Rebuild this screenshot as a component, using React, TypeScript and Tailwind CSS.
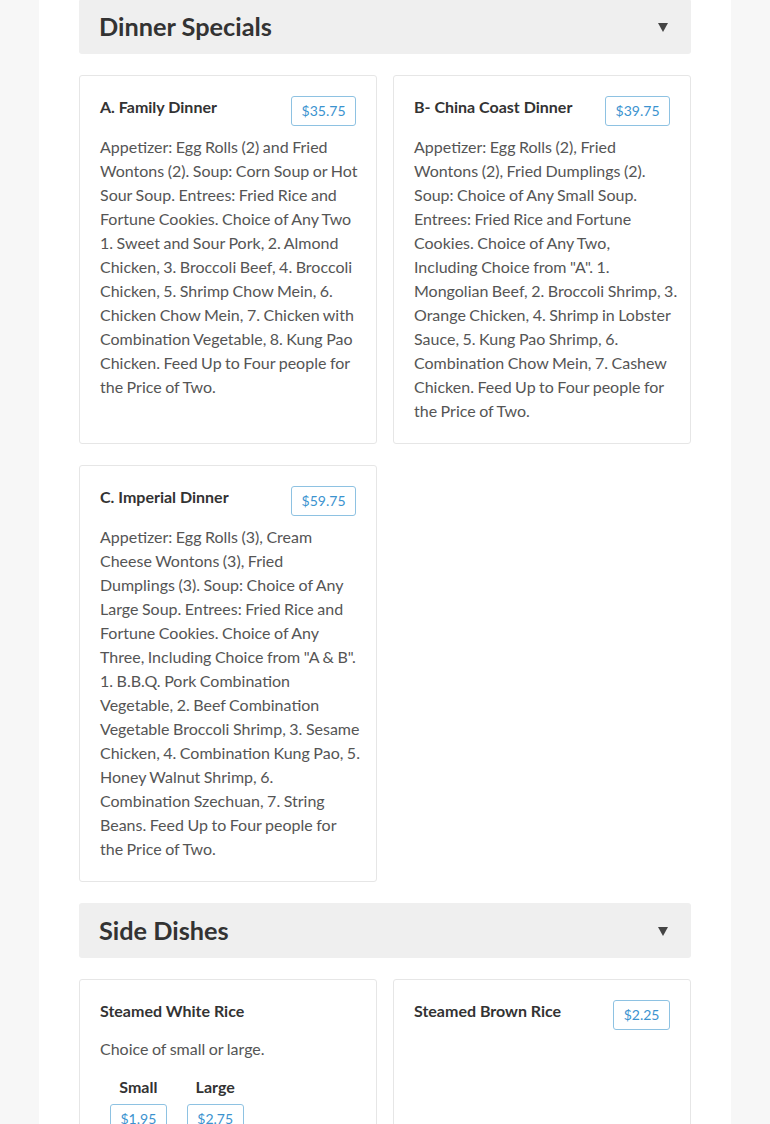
import React from "react";

type Item = {
  title: string;
  price?: string;
  desc?: string;
  lines?: string[];
  sizes?: { label: string; price: string }[];
};

const dinner: Item[] = [
  {
    title: "A. Family Dinner",
    price: "$35.75",
    desc:
      "Appetizer: Egg Rolls (2) and Fried Wontons (2). Soup: Corn Soup or Hot Sour Soup. Entrees: Fried Rice and Fortune Cookies. Choice of Any Two 1. Sweet and Sour Pork, 2. Almond Chicken, 3. Broccoli Beef, 4. Broccoli Chicken, 5. Shrimp Chow Mein, 6. Chicken Chow Mein, 7. Chicken with Combination Vegetable, 8. Kung Pao Chicken. Feed Up to Four people for the Price of Two.",
  },
  {
    title: "B- China Coast Dinner",
    price: "$39.75",
    lines: [
      "Appetizer: Egg Rolls (2), Fried",
      "Wontons (2), Fried Dumplings (2).",
      "Soup: Choice of Any Small Soup.",
      "Entrees: Fried Rice and Fortune",
      "Cookies. Choice of Any Two,",
      'Including Choice from "A". 1.',
      "Mongolian Beef, 2. Broccoli Shrimp, 3.",
      "Orange Chicken, 4. Shrimp in Lobster",
      "Sauce, 5. Kung Pao Shrimp, 6.",
      "Combination Chow Mein, 7. Cashew",
      "Chicken. Feed Up to Four people for",
      "the Price of Two.",
    ],
  },
  {
    title: "C. Imperial Dinner",
    price: "$59.75",
    desc:
      'Appetizer: Egg Rolls (3), Cream Cheese Wontons (3), Fried Dumplings (3). Soup: Choice of Any Large Soup. Entrees: Fried Rice and Fortune Cookies. Choice of Any Three, Including Choice from "A & B". 1. B.B.Q. Pork Combination Vegetable, 2. Beef Combination Vegetable Broccoli Shrimp, 3. Sesame Chicken, 4. Combination Kung Pao, 5. Honey Walnut Shrimp, 6. Combination Szechuan, 7. String Beans. Feed Up to Four people for the Price of Two.',
  },
];

const sides: Item[] = [
  {
    title: "Steamed White Rice",
    desc: "Choice of small or large.",
    sizes: [
      { label: "Small", price: "$1.95" },
      { label: "Large", price: "$2.75" },
    ],
  },
  { title: "Steamed Brown Rice", price: "$2.25" },
];

function Badge({ children }: { children: React.ReactNode }) {
  return (
    <span className="inline-block rounded-[3px] border border-[#8ec2e2] px-[9.5px] text-[14px] leading-[28px] text-[#3b93cf] whitespace-nowrap">
      {children}
    </span>
  );
}

function Card({ item }: { item: Item }) {
  const hasText = item.desc || item.lines;
  return (
    <div className="rounded-[3px] border border-[#e6e6e6] bg-white px-5 pt-5 pb-5">
      <div className="flex items-start justify-between gap-3">
        <h3 className="-mt-px text-[16px] font-bold leading-[24px] text-[#333]">{item.title}</h3>
        {item.price && <Badge>{item.price}</Badge>}
      </div>
      {hasText && (
        <p
          className={`${item.price ? "mt-[9px]" : "mt-[14px]"} -mr-[4px] text-[16px] leading-[24px] text-[#555] [word-spacing:-0.6px]`}
        >
          {item.lines
            ? item.lines.map((l, i) => (
                <span key={i} className="block whitespace-nowrap">
                  {l}
                </span>
              ))
            : item.desc}
        </p>
      )}
      {item.sizes && (
        <div className="mt-[15px] flex gap-[20px] px-[10px]">
          {item.sizes.map((s) => (
            <div key={s.label} className="flex flex-col items-center">
              <span className="-mt-px text-[16px] font-bold leading-[24px] text-[#333]">{s.label}</span>
              <div className="mt-[5px]">
                <Badge>{s.price}</Badge>
              </div>
            </div>
          ))}
        </div>
      )}
    </div>
  );
}

function Header({ title }: { title: string }) {
  return (
    <div className="flex h-[55px] items-center justify-between rounded-[3px] bg-[#efefef] pl-5 pr-[23px]">
      <h2 className="text-[25.3px] font-bold leading-none text-[#333]">{title}</h2>
      <svg width="10" height="10" viewBox="0 0 10 10" className="mt-px">
        <path d="M0 1 L10 1 L5 10 Z" fill="#444" />
      </svg>
    </div>
  );
}

export default function App() {
  return (
    <div className="min-h-[1124px] bg-[#f7f7f7]" style={{ fontFamily: "Lato, 'Noto Sans', sans-serif" }}>
      <div className="ml-[39px] w-[692px] bg-white px-10 pb-10 -mt-px">
        <Header title="Dinner Specials" />
        <div className="mt-[21px] grid grid-cols-2 items-stretch gap-x-4 gap-y-[21px]">
          {dinner.map((d) => (
            <Card key={d.title} item={d} />
          ))}
        </div>
        <div className="mt-[21px]">
          <Header title="Side Dishes" />
        </div>
        <div className="mt-[21px] grid grid-cols-2 gap-x-4 gap-y-[21px]">
          {sides.map((d) => (
            <div key={d.title} className="h-[200px] [&>div]:h-full">
              <Card item={d} />
            </div>
          ))}
        </div>
      </div>
    </div>
  );
}
